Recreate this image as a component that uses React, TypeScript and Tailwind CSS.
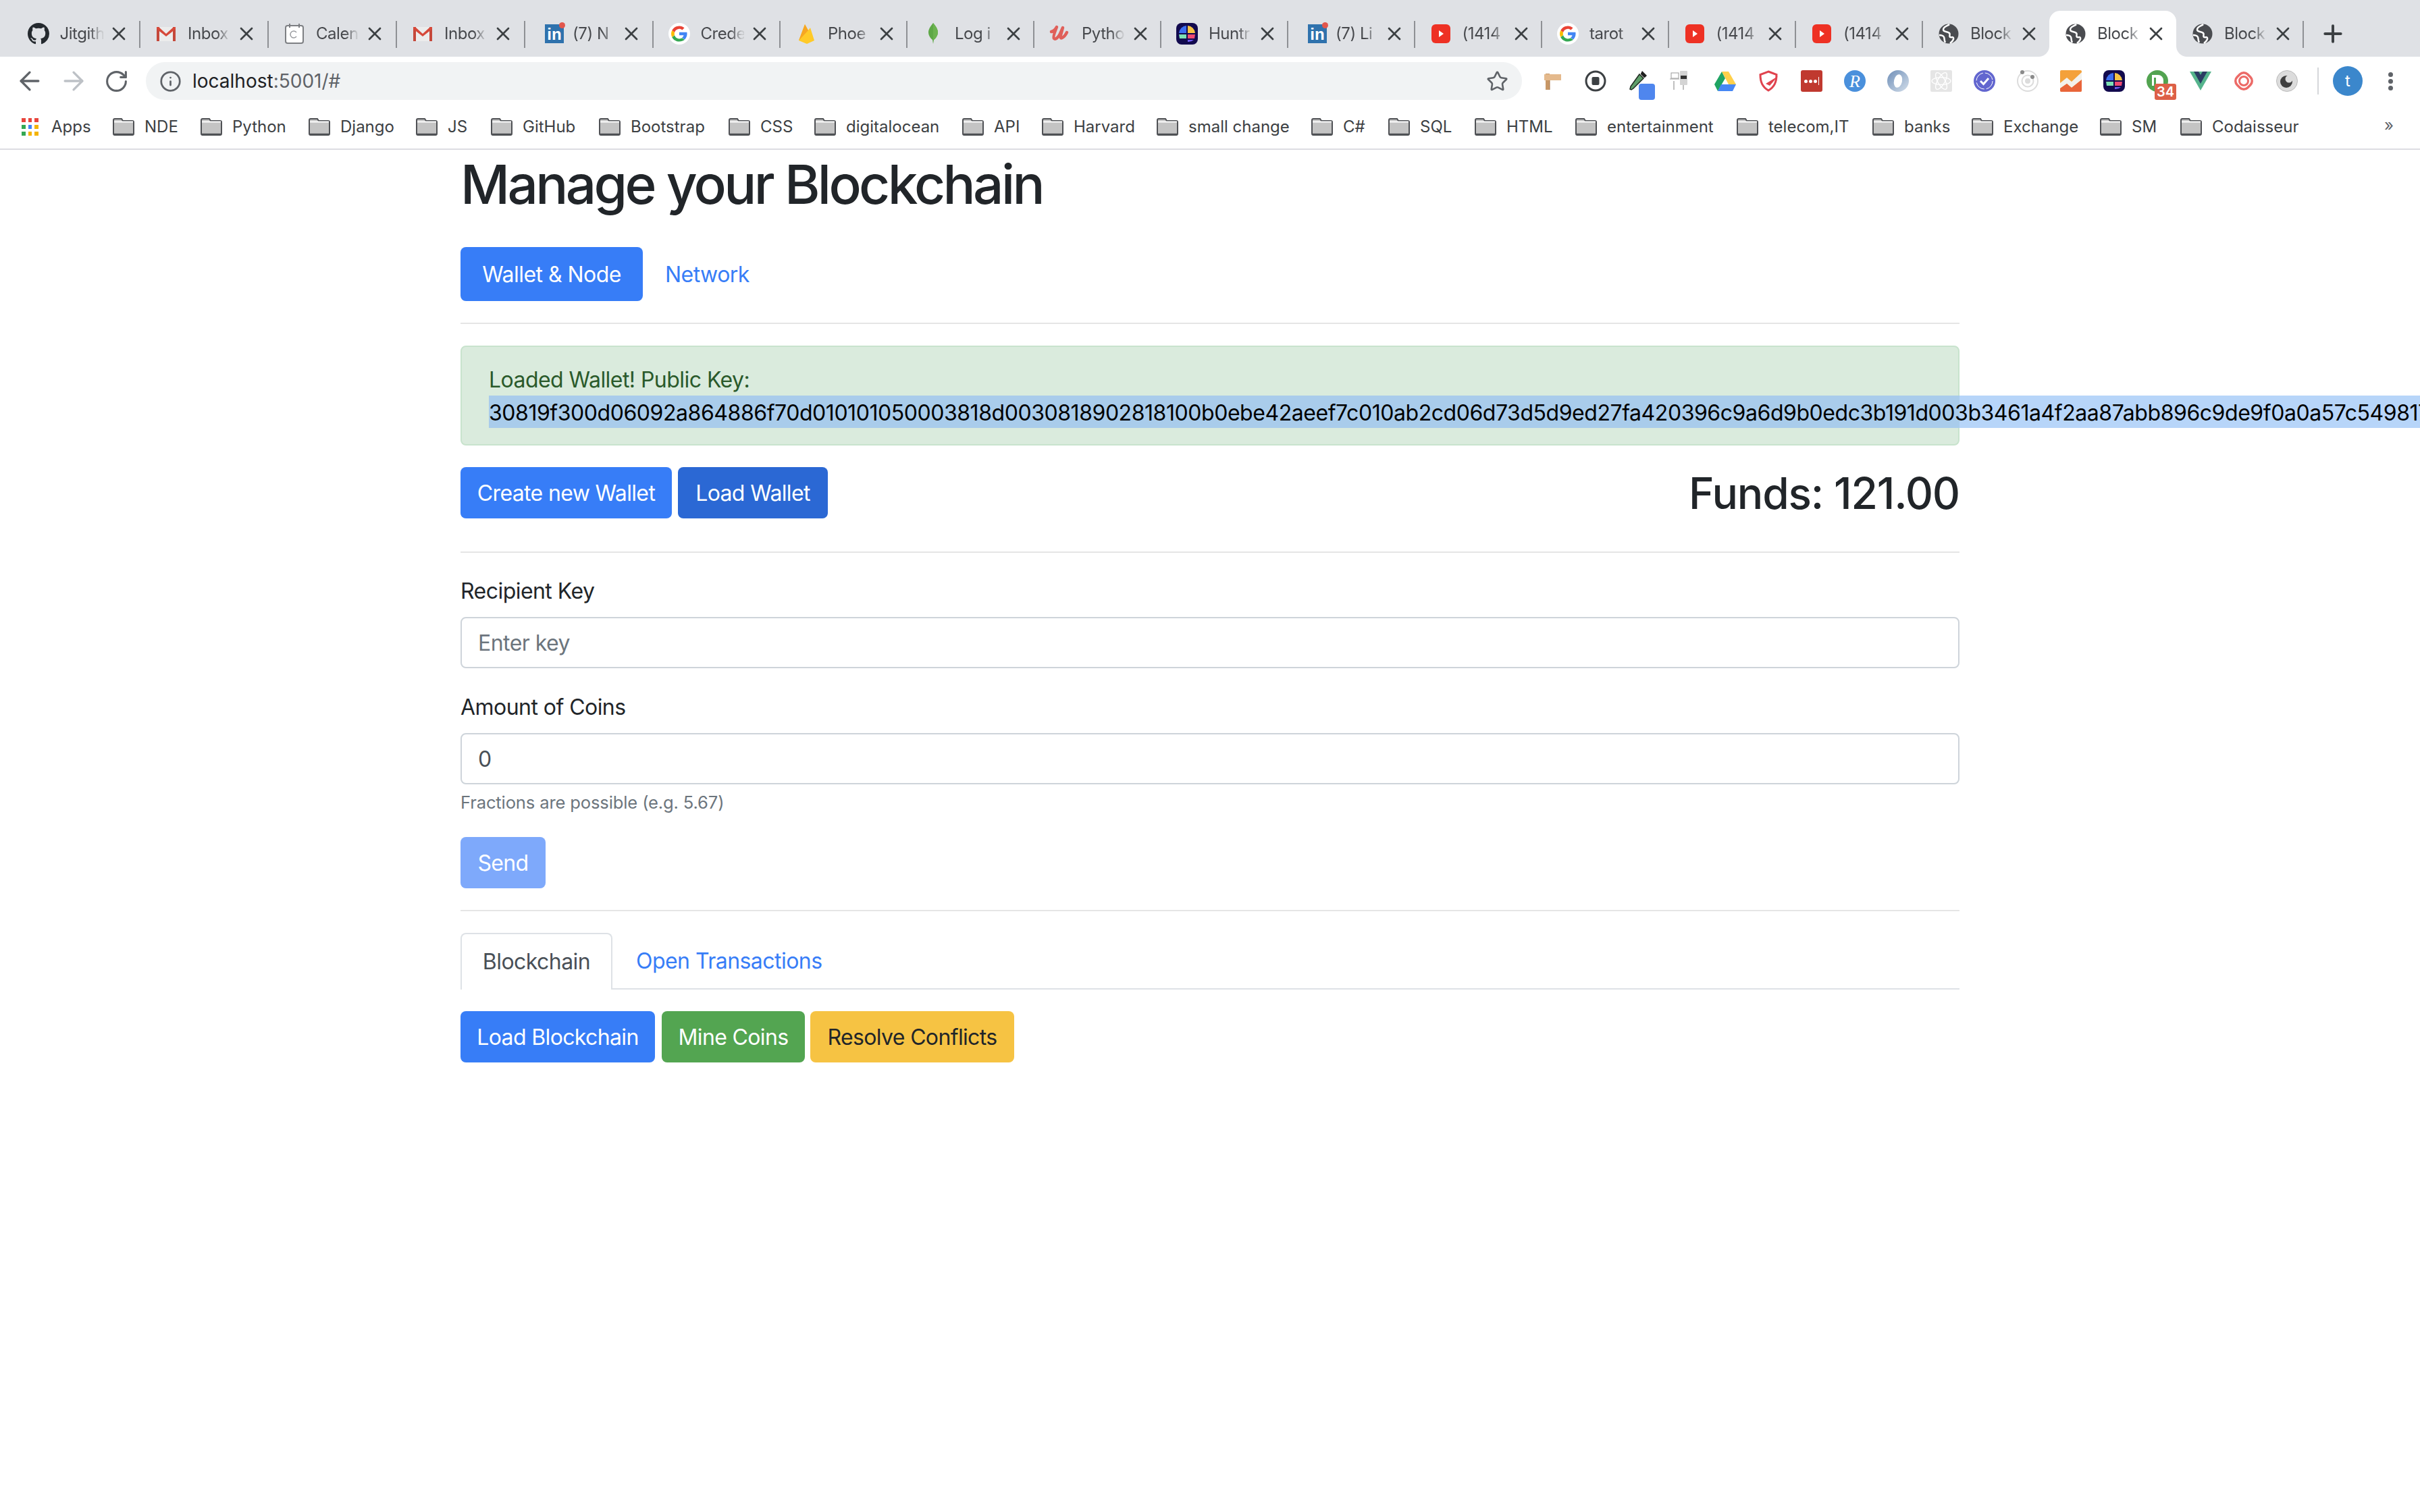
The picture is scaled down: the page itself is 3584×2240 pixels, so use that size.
import React from "react"
import { ArrowLeft, ArrowRight, RotateCw, Info, Star, Plus, X } from "lucide-react"

const sfStack = { fontFamily: "Inter, Roboto, 'Liberation Sans', sans-serif" }

type Fav = "github" | "gmail" | "cal" | "linkedin" | "google" | "firebase" | "mongo" | "udemy" | "huntr" | "youtube" | "globe"

const tabs: { title: string; icon: Fav; width: number }[] = [
    { title: "Jitgith", icon: "github", width: 189.5 },
    { title: "Inbox", icon: "gmail", width: 190 },
    { title: "Calen", icon: "cal", width: 190 },
    { title: "Inbox", icon: "gmail", width: 190 },
    { title: "(7) N", icon: "linkedin", width: 189.5 },
    { title: "Crede", icon: "google", width: 188.5 },
    { title: "Phoe", icon: "firebase", width: 188 },
    { title: "Log i", icon: "mongo", width: 188 },
    { title: "Pytho", icon: "udemy", width: 188 },
    { title: "Huntr", icon: "huntr", width: 188 },
    { title: "(7) Li", icon: "linkedin", width: 187.5 },
    { title: "(1414", icon: "youtube", width: 188.5 },
    { title: "tarot", icon: "google", width: 187.5 },
    { title: "(1414", icon: "youtube", width: 188.5 },
    { title: "(1414", icon: "youtube", width: 188 },
    { title: "Block", icon: "globe", width: 188 },
    { title: "Block", icon: "globe", width: 188 },
    { title: "Block", icon: "globe", width: 188 },
]

const bookmarks: { label: string; width: number }[] = [
    { label: "NDE", width: 130 },
    { label: "Python", width: 160 },
    { label: "Django", width: 159 },
    { label: "JS", width: 111 },
    { label: "GitHub", width: 160 },
    { label: "Bootstrap", width: 192 },
    { label: "CSS", width: 127 },
    { label: "digitalocean", width: 219 },
    { label: "API", width: 118 },
    { label: "Harvard", width: 170 },
    { label: "small change", width: 229 },
    { label: "C#", width: 114 },
    { label: "SQL", width: 128 },
    { label: "HTML", width: 149 },
    { label: "entertainment", width: 239 },
    { label: "telecom,IT", width: 201 },
    { label: "banks", width: 147 },
    { label: "Exchange", width: 190 },
    { label: "SM", width: 119 },
    { label: "Codaisseur", width: 200 },
]

const publicKey =
    "30819f300d06092a864886f70d010101050003818d0030818902818100b0ebe42aeef7c010ab2cd06d73d5d9ed27fa420396c9a6d9b0edc3b191d003b3461a4f2aa87abb896c9de9f0a0a57c549817f3a2"

function GoogleG({ size = 32 }: { size?: number }) {
    return (
        <svg width={size} height={size} viewBox="6 6 36 36">
            <circle cx="24" cy="24" r="18" fill="#fff" />
            <path fill="#EA4335" d="M24 11c3.400 0 6.300 1.200 8.500 3.200l-3.600 3.600C27.500 16.500 25.800 15.900 24 15.900c-3.600 0-6.700 2.400-7.800 5.800l-4.300-3.300C14.100 14.100 18.700 11 24 11z" />
            <path fill="#4285F4" d="M37 24.300c0-1-.1-1.800-.2-2.700H24v5h7.300c-.3 1.600-1.300 3-2.700 4l4.200 3.200c2.500-2.300 4.200-5.700 4.200-9.500z" />
            <path fill="#FBBC05" d="M16.200 26.300c-.2-.7-.3-1.500-.3-2.300s.1-1.600.3-2.300l-4.300-3.300C11 20.100 10.500 22 10.500 24s.5 3.900 1.400 5.600l4.300-3.300z" />
            <path fill="#34A853" d="M24 37c3.500 0 6.400-1.100 8.800-2.800l-4.200-3.200c-1.200.8-2.800 1.300-4.600 1.300-3.600 0-6.700-2.400-7.800-5.800l-4.300 3.300C14.100 33.900 18.700 37 24 37z" />
        </svg>
    )
}

function LinkedIn() {
    return (
        <div className="relative w-[28px] h-[28px] ml-[7px]">
            <div className="w-[28px] h-[28px] bg-[#2f72ad] text-white font-bold text-[24px] leading-[30px] text-center" style={{ fontFamily: "'Liberation Sans', sans-serif" }}>in</div>
            <div className="absolute left-[21px] top-[-3px] w-[9px] h-[9px] rounded-full bg-[#e2564c]" />
        </div>
    )
}

function HuntrIcon({ size = 32 }: { size?: number }) {
    return (
        <svg width={size} height={size} viewBox="0 0 32 32">
            <rect width="32" height="32" rx="8" fill="#120a4e" />
            <path d="M15 4a12 12 0 0 0-11 11h11z" fill="#3d6ef0" />
            <path d="M17 4a12 12 0 0 1 11 11H17z" fill="#f6c343" />
            <path d="M4 17h11v6H5z" fill="#7de0b4" />
            <path d="M17 17h11l-1 6H17z" fill="#ef4a72" />
            <path d="M17 25h9a12 12 0 0 1-9 3z" fill="#6f5cf0" />
        </svg>
    )
}

function GlobeIcon() {
    return (
        <svg width="32" height="32" viewBox="0 0 32 32">
            <circle cx="16" cy="16" r="14.500" fill="#4a4c50" />
            <path d="M17 2c-3 3-9 3-9 8 0 4 6 2 9 5 2 2-1 4 1 6 2 1 4-1 5 1 1 2-2 6-5 8" fill="none" stroke="#fff" strokeWidth="2.500" />
            <path d="M2 18c3 0 6 1 7 3s0 5 2 8" fill="none" stroke="#fff" strokeWidth="2.500" />
        </svg>
    )
}

function Favicon({ icon }: { icon: Fav }) {
    if (icon === "github") {
        return (
            <svg width="32" height="32" viewBox="0 0 16 16" fill="#24292e">
                <path d="M8 0C3.580 0 0 3.580 0 8c0 3.540 2.290 6.530 5.470 7.590.4.070.55-.17.55-.38 0-.19-.010-.82-.010-1.490-2.010.37-2.530-.49-2.690-.94-.09-.23-.48-.94-.82-1.130-.28-.15-.68-.52-.01-.53.63-.01 1.080.58 1.230.82.72 1.210 1.870.87 2.330.66.07-.52.28-.87.51-1.070-1.780-.2-3.640-.89-3.640-3.950 0-.87.31-1.590.82-2.150-.08-.2-.36-1.020.08-2.120 0 0 .67-.21 2.200.82.64-.18 1.320-.27 2-.27s1.360.09 2 .27c1.530-1.040 2.200-.82 2.200-.82.44 1.100.16 1.920.08 2.120.51.56.82 1.270.82 2.150 0 3.070-1.870 3.750-3.650 3.950.29.25.54.73.54 1.480 0 1.070-.010 1.930-.010 2.200 0 .21.150.46.550.38A8.010 8.010 0 0 0 16 8c0-4.420-3.580-8-8-8z" />
            </svg>
        )
    }
    if (icon === "gmail") {
        return (
            <svg width="32" height="32" viewBox="0 0 32 32">
                <rect x="2" y="6" width="28" height="21" fill="#ececec" />
                <path d="M2 6h4v21H2zM26 6h4v21h-4z" fill="#c5483b" />
                <path d="M2 6h3l11 10L27 6h3v3L16 20 2 9z" fill="#d6493a" />
            </svg>
        )
    }
    if (icon === "cal") {
        return (
            <svg width="32" height="32" viewBox="0 0 32 32">
                <rect x="3" y="4" width="26" height="26" rx="3" fill="#fff" stroke="#7d7f83" strokeWidth="2" />
                <path d="M9 1v6M23 1v6" stroke="#7d7f83" strokeWidth="2" />
                <path d="M19 14a5 5 0 1 0 0 6" fill="none" stroke="#9a9ca0" strokeWidth="1.500" />
            </svg>
        )
    }
    if (icon === "linkedin") return <LinkedIn />
    if (icon === "google") return <GoogleG />
    if (icon === "firebase") {
        return (
            <svg width="32" height="32" viewBox="0 0 32 32">
                <path d="M5 26 14 2l5 9 3-4 6 19-11 5z" fill="#ffca28" />
                <path d="M5 26 14 2l5 9z" fill="#f6a623" />
            </svg>
        )
    }
    if (icon === "mongo") {
        return (
            <svg width="32" height="32" viewBox="0 0 32 32">
                <path d="M16 0c5 6 7 10 7 14s-3 9-6 11l-1 6-1-6c-3-2-6-7-6-11S11 6 16 0z" fill="#5ea846" />
                <path d="M16 0v25l1 0c3-2 6-7 6-11S21 6 16 0z" fill="#6cb350" />
            </svg>
        )
    }
    if (icon === "udemy") {
        return (
            <svg width="32" height="32" viewBox="0 0 32 32">
                <path d="M3 13c3-1 6-3 8-7-2 5-6 15-4 17s6-1 9-7l4-9-3 11c-1 4 0 5 2 4s5-4 7-8" fill="none" stroke="#e0605a" strokeWidth="4.500" strokeLinecap="round" strokeLinejoin="round" />
            </svg>
        )
    }
    if (icon === "huntr") return <HuntrIcon />
    if (icon === "youtube") {
        return (
            <svg width="32" height="32" viewBox="0 0 32 32">
                <rect x="2" y="2" width="28" height="28" rx="6" fill="#ee3124" />
                <path d="M13 11l7 5-7 5z" fill="#fff" />
            </svg>
        )
    }
    return <GlobeIcon />
}

function Tab({ title, icon, width, active, hideSep }: { title: string; icon: Fav; width: number; active: boolean; hideSep: boolean }) {
    return (
        <div className={`relative h-[68px] shrink-0 flex items-center pl-[23px] ${active ? "bg-white rounded-t-[16px]" : ""}`} style={{ width }}>
            {active && (
                <>
                    <div className="absolute left-[-16px] bottom-0 w-[16px] h-[16px] bg-[radial-gradient(circle_at_0_0,#dfe1e5_15.500px,#ffffff_16.500px)]" />
                    <div className="absolute right-[-16px] bottom-0 w-[16px] h-[16px] bg-[radial-gradient(circle_at_100%_0,#dfe1e5_15.500px,#ffffff_16.500px)]" />
                </>
            )}
            <div className="w-[32px] h-[32px] shrink-0 flex items-center">
                <Favicon icon={icon} />
            </div>
            <div className="ml-[16px] w-[64px] whitespace-nowrap text-[24px] tracking-[-0.02em] text-[#45474b] bg-[linear-gradient(to_right,#45474b_68%,#c9cbce_95%)] bg-clip-text text-transparent">
                {title}
            </div>
            <X className="absolute left-[142px] top-[18px] w-[32px] h-[32px] text-[#3c4043]" strokeWidth={2} />
            {!hideSep && <div className="absolute right-[-1px] top-[15px] w-[2px] h-[40px] bg-[#8e9094]" />}
        </div>
    )
}

function Folder() {
    return (
        <svg width="32" height="26" viewBox="0 0 32 26" className="shrink-0">
            <path d="M1 3a2 2 0 0 1 2-2h10l2 3h14a2 2 0 0 1 2 2v17a2 2 0 0 1-2 2H3a2 2 0 0 1-2-2z" fill="#c4c4c4" stroke="#4f5155" strokeWidth="2" />
            <path d="M2 5.500h28" stroke="#fff" strokeWidth="2" />
            <path d="M2 24h28" stroke="#4f5155" strokeWidth="2.500" />
        </svg>
    )
}

function ExtIcon({ children }: { children: React.ReactNode }) {
    return <div className="w-[64px] h-[56px] shrink-0 flex items-center justify-center relative">{children}</div>
}

function Extensions() {
    return (
        <div className="flex items-center ml-[13px]">
            <ExtIcon>
                <svg width="26" height="26" viewBox="0 0 26 26">
                    <rect x="3" y="2" width="6" height="24" fill="#c89766" />
                    <path d="M1 3h25v9H1z" fill="#e4b98c" />
                    <path d="M9 12v14" stroke="#a8784d" strokeWidth="1" />
                </svg>
            </ExtIcon>
            <ExtIcon>
                <svg width="32" height="32" viewBox="0 0 32 32">
                    <circle cx="16" cy="16" r="14" fill="none" stroke="#3c4043" strokeWidth="3" />
                    <rect x="10.500" y="10" width="11" height="12" rx="2" fill="#3c4043" />
                </svg>
            </ExtIcon>
            <ExtIcon>
                <svg width="26" height="29" viewBox="0 0 26 29" className="mb-[2px] mr-[2px]">
                    <path d="M19 0l7 7-3 3-1 0-5-5 0-1z" fill="#1f1f1f" />
                    <path d="M15 5l6 6L6 26l-3 2-2-1 1-4z" fill="#5f9e6a" stroke="#1f2a20" strokeWidth="1.500" />
                </svg>
                <div className="absolute left-[32px] top-[32px] w-[24px] h-[24px] rounded-[4px] bg-[#4f86ee]" />
            </ExtIcon>
            <ExtIcon>
                <svg width="26" height="30" viewBox="0 0 26 30" className="mr-[10px]">
                    <rect x="2" y="3" width="11" height="8" fill="#fff" stroke="#999" />
                    <path d="M0 12h14" stroke="#999" />
                    <rect x="15" y="0" width="11" height="21" rx="1" fill="#d4d4d4" />
                    <rect x="16" y="7" width="9" height="5" fill="#333" />
                    <path d="M20 21v7M6 15v13" stroke="#aaa" strokeWidth="1.500" />
                </svg>
            </ExtIcon>
            <ExtIcon>
                <svg width="32" height="29" viewBox="0 0 32 29">
                    <path d="M11 0 0 19l5 10 11-19z" fill="#1fa463" />
                    <path d="M11 0h10l11 19H21z" fill="#ffd04b" />
                    <path d="M5 29h22l5-10H10z" fill="#4687f4" />
                </svg>
            </ExtIcon>
            <ExtIcon>
                <svg width="28" height="32" viewBox="0 0 28 32">
                    <path d="M14 2 26 6.500c0 11-3 18-12 23.500C5 24.500 2 17.500 2 6.500z" fill="none" stroke="#e0434e" strokeWidth="3" />
                    <path d="M10 20 28 9l-12 14z" fill="#e0434e" />
                </svg>
            </ExtIcon>
            <ExtIcon>
                <div className="w-[32px] h-[32px] rounded-[3px] bg-[#c0392f] flex items-center justify-center gap-[2px]">
                    <span className="w-[5px] h-[5px] rounded-full bg-white" />
                    <span className="w-[5px] h-[5px] rounded-full bg-white" />
                    <span className="w-[5px] h-[5px] rounded-full bg-white" />
                    <span className="w-[1.500px] h-[12px] bg-white" />
                </div>
            </ExtIcon>
            <ExtIcon>
                <div className="w-[32px] h-[32px] rounded-full bg-[#4a90dc] flex items-center justify-center text-white italic text-[26px]" style={{ fontFamily: "'Liberation Serif', serif" }}>R</div>
            </ExtIcon>
            <ExtIcon>
                <svg width="32" height="32" viewBox="0 0 32 32">
                    <defs>
                        <linearGradient id="ringFill" x1="0" y1="0" x2="1" y2="1">
                            <stop offset="0" stopColor="#6f8fb8" />
                            <stop offset="1" stopColor="#d3deea" />
                        </linearGradient>
                    </defs>
                    <circle cx="16" cy="16" r="16" fill="url(#ringFill)" />
                    <ellipse cx="16" cy="16" rx="6" ry="10" fill="#fff" transform="rotate(12 16 16)" />
                </svg>
            </ExtIcon>
            <ExtIcon>
                <div className="w-[32px] h-[32px] rounded-[2px] bg-[#e5e5e5] flex items-center justify-center">
                    <svg width="30" height="30" viewBox="-14 -14 28 28" fill="none" stroke="#fff" strokeWidth="1.300">
                        <ellipse rx="13" ry="5" />
                        <ellipse rx="13" ry="5" transform="rotate(60)" />
                        <ellipse rx="13" ry="5" transform="rotate(120)" />
                    </svg>
                </div>
            </ExtIcon>
            <ExtIcon>
                <svg width="32" height="32" viewBox="0 0 32 32" fill="none">
                    <circle cx="16" cy="16" r="16" fill="#6266cf" />
                    <circle cx="16" cy="16" r="12" stroke="#fff" strokeWidth="1" strokeDasharray="16 3" />
                    <path d="M10 16l4.500 4.500L22 12" stroke="#fff" strokeWidth="3" />
                </svg>
            </ExtIcon>
            <ExtIcon>
                <svg width="32" height="32" viewBox="0 0 32 32" fill="none">
                    <circle cx="16" cy="16" r="15" stroke="#dcdcdc" strokeWidth="2" />
                    <circle cx="16" cy="16" r="8.500" stroke="#dcdcdc" strokeWidth="2" />
                    <circle cx="16" cy="16" r="4" fill="#dcdcdc" />
                    <circle cx="8" cy="3" r="3" fill="#8a8a8a" />
                    <circle cx="23" cy="10" r="3" fill="#8a8a8a" />
                </svg>
            </ExtIcon>
            <ExtIcon>
                <svg width="32" height="32" viewBox="0 0 32 32">
                    <rect width="32" height="32" rx="2" fill="#f4a13a" />
                    <path d="M0 19 10 11l7 6L32 3v11L17 26l-7-6L0 27z" fill="#f3f1ec" />
                    <path d="M0 27l10-7 7 6L32 14v16a2 2 0 0 1-2 2H2a2 2 0 0 1-2-2z" fill="#e9653a" />
                </svg>
            </ExtIcon>
            <ExtIcon><HuntrIcon /></ExtIcon>
            <ExtIcon>
                <svg width="32" height="32" viewBox="0 0 32 32">
                    <circle cx="16" cy="16" r="16" fill="#52a350" />
                    <path d="M8 7h9a8 8 0 0 1 8 8v6H14V11h-3v12H8z" fill="#fff" />
                </svg>
                <div className="absolute left-[28px] top-[32px] w-[32px] h-[24px] rounded-[3px] bg-[#dd6047] text-white text-[20px] leading-[24px] font-semibold text-center">34</div>
            </ExtIcon>
            <ExtIcon>
                <svg width="32" height="28" viewBox="0 0 32 28">
                    <path d="M0 0h32L16 28z" fill="#55b48c" />
                    <path d="M6 0h20L16 18z" fill="#2b3d63" />
                    <path d="M13 0h6l-3 5z" fill="#55b48c" />
                </svg>
            </ExtIcon>
            <ExtIcon>
                <svg width="32" height="32" viewBox="0 0 32 32" fill="none" stroke="#ec6a67" strokeWidth="3.500">
                    <rect x="5" y="5" width="22" height="22" rx="8" transform="rotate(45 16 16)" />
                    <circle cx="16" cy="16" r="6.500" strokeWidth="3" />
                </svg>
            </ExtIcon>
            <ExtIcon>
                <svg width="32" height="32" viewBox="0 0 32 32">
                    <circle cx="16" cy="16" r="15.500" fill="#dcdcdc" stroke="#bbb" />
                    <circle cx="15" cy="17" r="9" fill="#3f3f3f" />
                    <circle cx="19" cy="13" r="5.500" fill="#dcdcdc" />
                </svg>
            </ExtIcon>
            <div className="w-[2px] h-[40px] bg-[#d5d7da] ml-[13px]" />
            <div className="w-[44px] h-[44px] rounded-full bg-[#3b87cc] ml-[21px] text-white text-[24px] flex items-center justify-center">t</div>
            <div className="ml-[38px] flex flex-col gap-[3px]">
                <span className="w-[7px] h-[7px] rounded-full bg-[#5f6368]" />
                <span className="w-[7px] h-[7px] rounded-full bg-[#5f6368]" />
                <span className="w-[7px] h-[7px] rounded-full bg-[#5f6368]" />
            </div>
        </div>
    )
}

function BrowserChrome() {
    return (
        <div className="w-[3584px]" style={sfStack}>
            <div className="h-[84px] bg-[#dfe1e5] flex items-end pl-[17.500px]">
                {tabs.map((t, i) => (
                    <Tab key={i} title={t.title} icon={t.icon} width={t.width} active={i === 16} hideSep={i === 15 || i === 16} />
                ))}
                <Plus className="w-[40px] h-[40px] text-[#3c4043] ml-[24px] mb-[14px]" strokeWidth={2.400} />
            </div>
            <div className="h-[72px] bg-white flex items-center">
                <ArrowLeft className="w-[44px] h-[44px] ml-[22px] text-[#5f6368]" strokeWidth={1.800} />
                <ArrowRight className="w-[44px] h-[44px] ml-[21px] text-[#bdc1c6]" strokeWidth={1.800} />
                <RotateCw className="w-[37px] h-[37px] ml-[23px] text-[#5f6368]" strokeWidth={2} />
                <div className="w-[2038px] h-[56px] ml-[25px] rounded-full bg-[#f1f3f4] flex items-center pl-[20px] pr-[20px]">
                    <Info className="w-[33px] h-[33px] text-[#5f6368]" strokeWidth={2} />
                    <span className="ml-[16px] text-[28px] text-[#202124]">localhost<span className="text-[#5f6368]">:5001/#</span></span>
                    <Star className="w-[33px] h-[33px] ml-auto text-[#5f6368]" strokeWidth={1.900} />
                </div>
                <Extensions />
            </div>
            <div className="h-[64px] bg-white flex items-center pl-[32px] text-[24px] text-[#3c4043] relative">
                <div className="w-[135px] flex items-center shrink-0">
                    <div className="grid grid-cols-3 gap-[4px] w-[25px] shrink-0">
                        {["#e8453c", "#e8453c", "#e8453c", "#34a853", "#4285f4", "#f4b400", "#34a853", "#f4b400", "#f4b400"].map((c, i) => (
                            <span key={i} className="h-[6px]" style={{ backgroundColor: c }} />
                        ))}
                    </div>
                    <span className="ml-[19px]">Apps</span>
                </div>
                {bookmarks.map((b) => (
                    <div key={b.label} className="flex items-center shrink-0" style={{ width: b.width }}>
                        <Folder />
                        <span className="ml-[15px] whitespace-nowrap">{b.label}</span>
                    </div>
                ))}
                <span className="absolute left-[3531px] top-[12px] text-[#5f6368]">»</span>
            </div>
            <div className="h-[2px] bg-[#dcdce2]" />
        </div>
    )
}

function Btn({ children, className }: { children: React.ReactNode; className: string }) {
    return <button className={`h-[76px] pt-[2px] rounded-[8px] text-[32px] tracking-[-0.02em] shrink-0 ${className}`}>{children}</button>
}

function Hr() {
    return <div className="h-[2px] bg-[#e5e5e5]" />
}

export default function App() {
    return (
        <div className="w-[3584px] h-[2240px] bg-white overflow-hidden" style={sfStack}>
            <BrowserChrome />
            <div className="w-[2220px] ml-[682px] text-[#212529] text-[32px] leading-[48px] tracking-[-0.017em]">
                <h1 className="text-[80px] leading-[96px] font-medium tracking-[-0.045em] pt-[3px] mb-[45px]">Manage your Blockchain</h1>

                <div className="flex items-center">
                    <div className="h-[80px] w-[270px] pt-[2px] rounded-[8px] bg-[#377df7] text-white flex items-center justify-center">Wallet &amp; Node</div>
                    <div className="ml-[33px] pt-[2px] text-[#377df7]">Network</div>
                </div>
                <div className="my-[32px]"><Hr /></div>

                <div className="h-[148px] rounded-[8px] border-2 border-[#c8e3cd] bg-[#daebdd] text-[#2a5a2b] pt-[24px] px-[40px] mb-[32px]">
                    <div className="pt-[1px] h-[48px]">Loaded Wallet! Public Key:</div>
                    <div className="w-max h-[48px] pt-[2px] whitespace-nowrap text-black bg-[#b7d5f9] relative tracking-[-0.014em]">
                        <span className="absolute inset-y-0 left-0 bg-[#a9cceb] w-[2178px]" />
                        <span className="relative">{publicKey}</span>
                    </div>
                </div>

                <div className="flex items-start justify-between h-[93px]">
                    <div className="flex">
                        <Btn className="w-[313px] bg-[#377df7] text-white">Create new Wallet</Btn>
                        <Btn className="w-[222px] ml-[9px] bg-[#2b68d4] text-white">Load Wallet</Btn>
                    </div>
                    <h2 className="text-[64px] leading-[77px] font-medium tracking-[-0.018em]">Funds: 121.00</h2>
                </div>
                <div className="mt-[32px] mb-[31px]"><Hr /></div>

                <label className="block pt-[2px] mb-[14px]">Recipient Key</label>
                <input readOnly placeholder="Enter key" className="block w-full h-[76px] px-[24px] pt-[1px] rounded-[8px] border-2 border-[#ced4da] placeholder:text-[#6c757d] mb-[32px]" />

                <label className="block pt-[2px] mb-[14px]">Amount of Coins</label>
                <input readOnly value="0" className="block w-full h-[76px] px-[24px] pt-[1px] rounded-[8px] border-2 border-[#ced4da] text-[#495057]" />
                <div className="mt-[8px] text-[25.600px] leading-[38.400px] tracking-[-0.006em] text-[#6c757d] mb-[32px]">Fractions are possible (e.g. 5.67)</div>

                <Btn className="w-[126px] bg-[#7ea9fb] text-white">Send</Btn>
                <div className="my-[32px]"><Hr /></div>

                <div className="flex border-b-2 border-[#dee2e6] h-[84px]">
                    <div className="w-[225px] h-[84px] rounded-t-[8px] border-2 border-b-0 border-[#dee2e6] bg-white flex items-center justify-center text-[#495057]">Blockchain</div>
                    <div className="ml-[35px] h-[84px] flex items-center text-[#377df7]">Open Transactions</div>
                </div>

                <div className="flex mt-[32px]">
                    <Btn className="w-[288px] bg-[#377df7] text-white">Load Blockchain</Btn>
                    <Btn className="w-[212px] ml-[10px] bg-[#53a551] text-white">Mine Coins</Btn>
                    <Btn className="w-[302px] ml-[8px] bg-[#f6c343] text-[#212529]">Resolve Conflicts</Btn>
                </div>
            </div>
        </div>
    )
}
